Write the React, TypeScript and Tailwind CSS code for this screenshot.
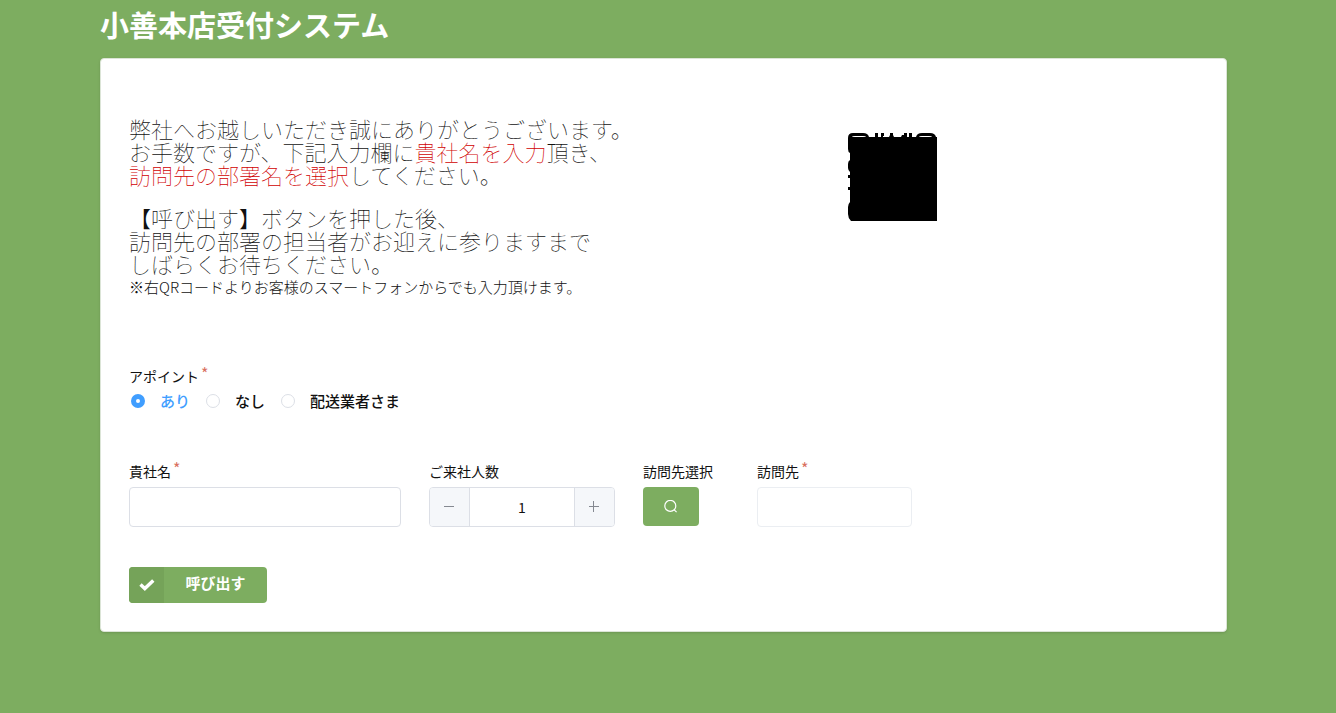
import { useState } from 'react';
import type { ReactNode } from 'react';

const APPOINTMENTS = ['あり', 'なし', '配送業者さま'];

function Required() {
  return <span className="ml-0.5 align-[2px] text-base leading-[0] text-[#d9705f]">*</span>;
}

function FieldLabel({ htmlFor, required, children }: { htmlFor: string; required?: boolean; children: ReactNode }) {
  return (
    <label htmlFor={htmlFor} className="h-5 text-sm leading-5">
      {children}
      {required && <Required />}
    </label>
  );
}

function QrCode() {
  return (
    <svg viewBox="0 0 90 88" className="h-[88px] w-[90px]" role="img" aria-label="QRコード">
      <path d="M2 4h87v84H3q-3-3-3-7V74q0-3 2-5V57H0v-3h2V45H0v-3h2V39q-2-2-2-4v-4q0-3 2-4V20q-2-1-2-4V5q0-5 5-5h10q5 0 6 4h6V0h3v4h3V0h3v3h-1v1h6l1-2V0h3v2l1 2h7l1-2h2V0h3v4h2V0h3v4h4q1-4 6-4h8q5 0 6 4z" />
      <path d="M4 4q0-1 3-1h8q3 0 3 1zM71 4q0-1 3-1h7q3 0 3 1z" fill="#fff" />
    </svg>
  );
}

export default function App() {
  const [appointment, setAppointment] = useState(APPOINTMENTS[0]);
  const [count, setCount] = useState(1);

  return (
    <div className="min-h-screen bg-[#7dad60] pr-[109px] pb-20 pl-[100px] font-['Noto_Sans_CJK_JP','Liberation_Sans',sans-serif] text-[#111]">
      <header className="flex h-[58px] items-start pt-0.5">
        <h1 className="text-[29px] leading-[44px] font-bold text-white">小善本店受付システム</h1>
      </header>

      <main className="rounded border border-[#dce5d7] bg-white px-7 pt-[58px] pb-7 shadow-sm">
        <section className="grid grid-cols-3">
          <div className="col-span-2 text-[22px] leading-[23px] font-thin">
            <p>
              弊社へお越しいただき誠にありがとうございます。
              <br />
              お手数ですが、下記入力欄に<span className="text-[#d00000]">貴社名を入力</span>頂き、
              <br />
              <span className="text-[#d00000]">訪問先の部署名を選択</span>してください。
            </p>
            <p className="mt-5">
              【呼び出す】ボタンを押した後、
              <br />
              訪問先の部署の担当者がお迎えに参りますまで
              <br />
              しばらくお待ちください。
            </p>
            <p className="text-[15px] leading-6 font-light">
              ※右QRコードよりお客様のスマートフォンからでも入力頂けます。
            </p>
          </div>
          <div className="pt-4 pl-1.5">
            <QrCode />
          </div>
        </section>

        <form onSubmit={(e) => e.preventDefault()}>
          <fieldset className="mt-[67px]">
            <legend className="h-5 text-sm leading-5">
              アポイント
              <Required />
            </legend>
            <div className="ml-0.5 flex h-[30px] items-center gap-4">
              {APPOINTMENTS.map((name) => (
                <label
                  key={name}
                  className="flex items-center gap-[15px] text-[15px] leading-5 font-medium has-checked:text-[#409eff]"
                >
                  <input
                    type="radio"
                    name="appointment"
                    value={name}
                    checked={appointment === name}
                    onChange={() => setAppointment(name)}
                    className="size-3.5 appearance-none rounded-full border border-[#dcdfe6] bg-white checked:border-5 checked:border-[#409eff]"
                  />
                  {name}
                </label>
              ))}
            </div>
          </fieldset>

          <div className="mt-[45px] flex items-start gap-7">
            <div className="flex w-[272px] flex-col gap-1.5">
              <FieldLabel htmlFor="company" required>
                貴社名
              </FieldLabel>
              <input id="company" type="text" className="h-10 w-full rounded border border-[#dcdfe6] bg-white px-4 text-sm" />
            </div>

            <div className="flex w-[186px] flex-col gap-1.5">
              <FieldLabel htmlFor="count">ご来社人数</FieldLabel>
              <div className="flex h-10 overflow-hidden rounded border border-[#dcdfe6]">
                <button
                  type="button"
                  aria-label="減らす"
                  onClick={() => setCount(Math.max(1, count - 1))}
                  className="flex w-10 items-center justify-center border-r border-[#dcdfe6] bg-[#f5f7fa] text-[#858991]"
                >
                  <svg viewBox="0 0 12 12" className="size-3" stroke="currentColor">
                    <path d="M0 5.5h10" />
                  </svg>
                </button>
                <input
                  id="count"
                  type="text"
                  inputMode="numeric"
                  value={count}
                  onChange={(e) => setCount(Number(e.target.value) || 1)}
                  className="min-w-0 flex-1 text-center text-sm"
                />
                <button
                  type="button"
                  aria-label="増やす"
                  onClick={() => setCount(count + 1)}
                  className="flex w-10 items-center justify-center border-l border-[#dcdfe6] bg-[#f5f7fa] text-[#858991]"
                >
                  <svg viewBox="0 0 12 12" className="size-3" stroke="currentColor">
                    <path d="M0 5.5h10M4.5 0v11" />
                  </svg>
                </button>
              </div>
            </div>

            <div className="flex w-[86px] flex-col items-start gap-1.5">
              <FieldLabel htmlFor="search">訪問先選択</FieldLabel>
              <button id="search" type="button" className="flex h-[39px] w-14 items-center justify-center rounded bg-[#7dad60] text-white">
                <svg viewBox="0 0 14 14" className="size-3.5" fill="none" stroke="currentColor" strokeWidth="1.2">
                  <circle cx="6.3" cy="5.9" r="5.5" />
                  <path d="M10.2 9.8L12.6 12.2" />
                </svg>
              </button>
            </div>

            <div className="flex w-[155px] flex-col gap-1.5">
              <FieldLabel htmlFor="destination" required>
                訪問先
              </FieldLabel>
              <input id="destination" type="text" readOnly className="h-10 w-full rounded border border-[#ebeef2] bg-white px-4 text-sm" />
            </div>
          </div>

          <button type="submit" className="mt-10 flex h-9 w-[138px] items-stretch overflow-hidden rounded bg-[#7dad60] text-[15px] font-bold text-white">
            <span className="flex w-[35px] items-center justify-center bg-[#75a359]">
              <svg viewBox="0 0 16 12" className="h-3 w-4" fill="none" stroke="currentColor" strokeWidth="3.4">
                <path d="M1.5 5.6L5.8 9.6L14.3 1.5" />
              </svg>
            </span>
            <span className="flex flex-1 items-center justify-center pb-1">呼び出す</span>
          </button>
        </form>
      </main>
    </div>
  );
}
